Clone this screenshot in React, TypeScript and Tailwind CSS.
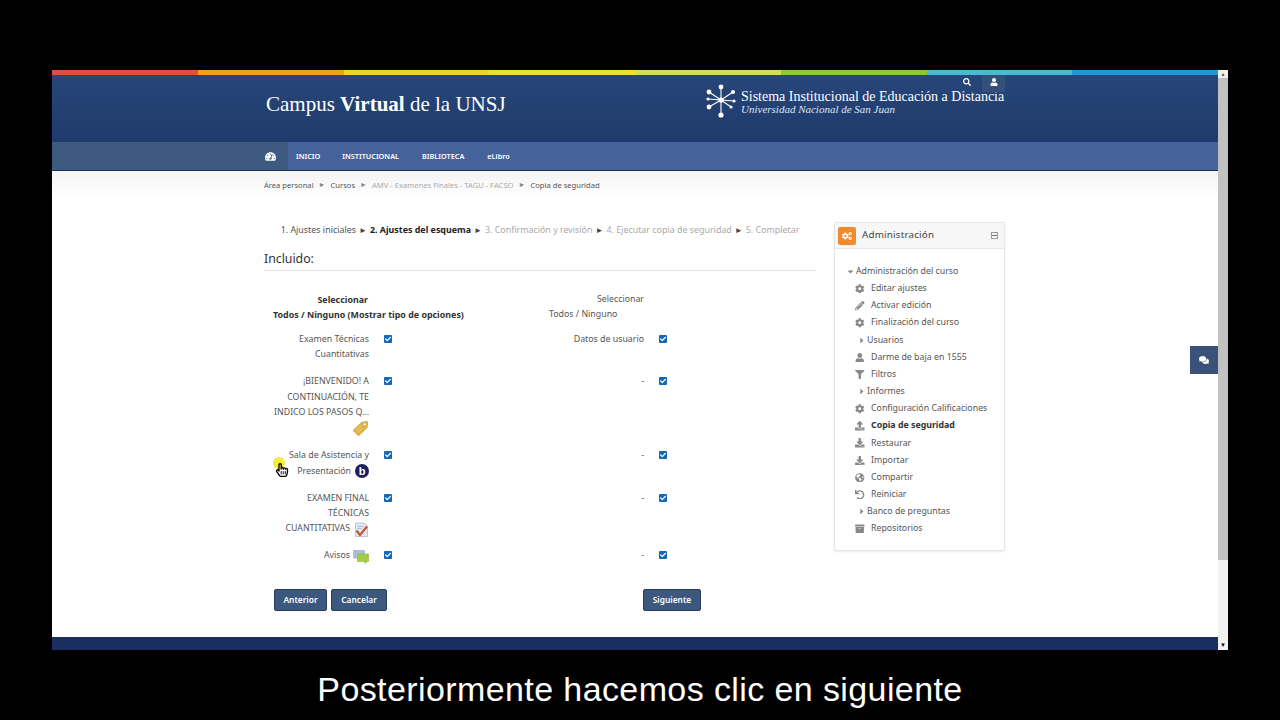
import type { ReactNode } from "react";
import {
  FaArchive,
  FaCaretDown,
  FaCaretRight,
  FaCheck,
  FaCog,
  FaCogs,
  FaComments,
  FaDownload,
  FaFilter,
  FaGlobeAmericas,
  FaPencilAlt,
  FaRegHandPointer,
  FaSearch,
  FaTachometerAlt,
  FaUndo,
  FaUpload,
  FaUser,
} from "react-icons/fa";

const stripes = [
  "bg-[#d9533c]",
  "bg-[#ef9f26]",
  "bg-[#f0d32e]",
  "bg-[#eedd3c]",
  "bg-[#d3dc63]",
  "bg-[#8cc63f]",
  "bg-[#45bcd0]",
  "bg-[#1e9ad6]",
];

function Logo() {
  const arms = [
    [0, -13, 2.4],
    [12, -8, 2],
    [13, 1, 1.6],
    [10, 7, 1.6],
    [0, 15, 2.6],
    [-12, 7, 2.4],
    [-13, -1, 1.6],
    [-12, -8, 2.4],
  ];
  return (
    <svg width="32" height="36" viewBox="-16 -18 32 36" className="shrink-0">
      {arms.map(([x, y, r]) => (
        <g key={`${x}-${y}`}>
          <line x1="0" y1="0" x2={x} y2={y} stroke="#fff" strokeWidth="1.1" />
          <circle cx={x} cy={y} r={r} fill="#fff" />
        </g>
      ))}
      <circle cx="0" cy="0" r="2.6" fill="#fff" />
    </svg>
  );
}

function Check() {
  return (
    <span className="flex h-[8px] w-[8px] items-center justify-center rounded-[1px] bg-[#1568b8]">
      <FaCheck className="text-[6px] text-white" />
    </span>
  );
}

function TagIcon() {
  return (
    <svg width="17" height="17" viewBox="0 0 17 17">
      <path d="M1 10.5 9.8 2.2 15.6 1.6 15.2 7.4 6.6 15.8Z" fill="#e0b040" stroke="#c59a34" strokeWidth="0.7" />
      <path d="M4 10.5 9.5 5.5M6 12.5 11 7.8" stroke="#f5dc8e" strokeWidth="1" />
      <circle cx="12.7" cy="4.4" r="1.2" fill="#fff" />
    </svg>
  );
}

function BbbIcon() {
  return (
    <span className="flex h-[14px] w-[14px] items-center justify-center rounded-full bg-[#1c2160] font-['Liberation_Sans',sans-serif] text-[11px] font-bold leading-none text-white">
      b
    </span>
  );
}

function QuizIcon() {
  return (
    <svg width="15" height="15" viewBox="0 0 15 15">
      <path d="M1.5 1h9l3 3v10.5h-12Z" fill="#dfe8f3" stroke="#aebccd" strokeWidth="0.8" />
      <path d="M3.5 4.5h6M3.5 6.5h4" stroke="#9fb0c6" strokeWidth="0.8" />
      <path d="M2.5 8.5 6 13 13 4.5" fill="none" stroke="#c8562e" strokeWidth="2.2" />
    </svg>
  );
}

function ForumIcon() {
  return (
    <svg width="16" height="15" viewBox="0 0 16 15">
      <path d="M0.5 1.5h11v7.5h-11Z" fill="#a9c0dc" stroke="#8ea8c8" strokeWidth="0.6" />
      <path d="M4.5 5h11v7.5h-2.5v2l-2.5-2h-6Z" fill="#a4cc46" stroke="#8cb338" strokeWidth="0.6" />
    </svg>
  );
}

function Row({
  right,
  children,
  mb = "mb-[11.6px]",
}: {
  right: string;
  children: ReactNode;
  mb?: string;
}) {
  return (
    <div className={`flex ${mb}`}>
      <div className="w-[105px] text-right">{children}</div>
      <div className="ml-[15px] w-[8px] pt-[3px]">
        <Check />
      </div>
      <div className="ml-[131px] w-[121px] text-right">{right}</div>
      <div className="ml-[15px] w-[8px] pt-[3px]">
        <Check />
      </div>
    </div>
  );
}

const menu: { label: string; icon?: ReactNode; caret?: boolean; bold?: boolean }[] = [
  { label: "Editar ajustes", icon: <FaCog /> },
  { label: "Activar edición", icon: <FaPencilAlt /> },
  { label: "Finalización del curso", icon: <FaCog /> },
  { label: "Usuarios", caret: true },
  { label: "Darme de baja en 1555", icon: <FaUser /> },
  { label: "Filtros", icon: <FaFilter /> },
  { label: "Informes", caret: true },
  { label: "Configuración Calificaciones", icon: <FaCog /> },
  { label: "Copia de seguridad", icon: <FaUpload />, bold: true },
  { label: "Restaurar", icon: <FaDownload /> },
  { label: "Importar", icon: <FaDownload /> },
  { label: "Compartir", icon: <FaGlobeAmericas /> },
  { label: "Reiniciar", icon: <FaUndo /> },
  { label: "Banco de preguntas", caret: true },
  { label: "Repositorios", icon: <FaArchive /> },
];

function AdminBlock() {
  return (
    <aside className="h-[329px] w-[171px] rounded-[2px] border border-[#e6e6e6] bg-white shadow-[0_1px_2px_rgba(0,0,0,0.08)]">
      <div className="flex h-[26px] items-center border-b border-[#e8e8e8] bg-[#f7f7f7] pl-[3px] pr-[6px]">
        <span className="flex h-[18px] w-[18px] items-center justify-center rounded-[2px] bg-[#f08a2c] text-[10px] text-white">
          <FaCogs />
        </span>
        <span className="ml-[6px] flex-1 text-[9.8px] tracking-[0.2px] text-[#444]">Administración</span>
        <span className="flex h-[7px] w-[7px] items-center justify-center border border-[#999]">
          <span className="h-px w-[5px] bg-[#777]" />
        </span>
      </div>
      <div className="pt-[14px] text-[8.8px] leading-[17.15px] text-[#555]">
        <div className="flex items-center pl-[10px]">
          <FaCaretDown className="w-[11px] text-[9px] text-[#888]" />
          <span>Administración del curso</span>
        </div>
        {menu.map((item) =>
          item.caret ? (
            <div key={item.label} className="flex items-center pl-[22px]">
              <FaCaretRight className="w-[10px] text-[9px] text-[#888]" />
              <span>{item.label}</span>
            </div>
          ) : (
            <div key={item.label} className="flex items-center pl-[20px]">
              <span className="w-[16px] text-[9.5px] text-[#888]">{item.icon}</span>
              <span className={item.bold ? "font-bold text-[#333]" : ""}>{item.label}</span>
            </div>
          ),
        )}
      </div>
    </aside>
  );
}

function Btn({ children, w }: { children: string; w: string }) {
  return (
    <button className={`h-[22px] ${w} rounded-[2px] border border-[#2b3f5c] bg-[#3c587f] text-[8.4px] font-semibold text-white`}>
      {children}
    </button>
  );
}

export default function App() {
  return (
    <div className="flex h-[720px] w-[1280px] flex-col overflow-hidden bg-black font-['Noto_Sans','Open_Sans',sans-serif]">
      <div className="ml-[52px] mt-[70px] flex h-[580px] w-[1176px]">
        <div className="relative flex w-[1166px] flex-col bg-white">
          <div className="flex h-[5px] shrink-0">
            {stripes.map((c) => (
              <div key={c} className={`flex-1 ${c}`} />
            ))}
          </div>

          <header className="flex h-[67px] shrink-0 bg-gradient-to-b from-[#274679] to-[#203a6c] pl-[214px] text-white">
            <div className="w-[439px] pt-[14px] font-['Liberation_Serif',serif] text-[21px] leading-[30px]">
              Campus <b>Virtual</b> de la UNSJ
            </div>
            <div className="flex pt-[7px]">
              <Logo />
              <div className="ml-[4px] pt-[7px] font-['Liberation_Serif',serif]">
                <div className="text-[14px] leading-[15px]">Sistema Institucional de Educación a Distancia</div>
                <div className="text-[11px] italic leading-[11px] text-[#dfe6f0]">
                  Universidad Nacional de San Juan
                </div>
              </div>
            </div>
          </header>

          <nav className="flex h-[29px] shrink-0 items-center border-b border-[#1d3356] bg-[#46629a] text-[7.3px] font-semibold text-white">
            <div className="flex h-full w-[236px] items-center justify-end bg-[#3e5a80] pr-[12px] text-[11px]">
              <FaTachometerAlt />
            </div>
            <span className="ml-[8px] pt-[1px]">INICIO</span>
            <span className="ml-[22px] pt-[1px]">INSTITUCIONAL</span>
            <span className="ml-[23px] pt-[1px]">BIBLIOTECA</span>
            <span className="ml-[23px] pt-[1px]">eLibro</span>
          </nav>

          <div className="flex h-[28px] shrink-0 items-center gap-[5px] bg-gradient-to-b from-[#f4f4f4] to-white pl-[212px] pt-[1px] text-[7.6px] text-[#555]">
            <span>Área personal</span>
            <span className="text-[7px] text-[#888]">►</span>
            <span>Cursos</span>
            <span className="text-[7px] text-[#888]">►</span>
            <span className="text-[#aaa]">AMV - Examenes Finales - TAGU - FACSO</span>
            <span className="text-[7px] text-[#888]">►</span>
            <span>Copia de seguridad</span>
          </div>

          <main className="flex flex-1 pl-[212px] pt-[23px]">
            <div className="w-[552px] text-[8.8px] leading-[15.4px] text-[#555]">
              <div className="flex h-[16px] items-center justify-center gap-[3px] whitespace-nowrap text-[8.9px] text-[#aaa]">
                <span className="text-[#555]">1. Ajustes iniciales</span>
                <span className="text-[8px] text-[#444]">►</span>
                <b className="text-[#222]">2. Ajustes del esquema</b>
                <span className="text-[8px] text-[#444]">►</span>
                <span>3. Confirmación y revisión</span>
                <span className="text-[8px] text-[#444]">►</span>
                <span>4. Ejecutar copia de seguridad</span>
                <span className="text-[8px] text-[#444]">►</span>
                <span>5. Completar</span>
              </div>
              <h2 className="mt-[13px] h-[20px] border-b border-[#ddd] text-[12.3px] leading-[16px] text-[#333]">Incluido:</h2>

              <div className="mt-[21px] flex h-[40px]">
                <div className="w-[105px] text-right text-[8.9px] font-bold text-[#333]">
                  <div className="pr-[1px]">Seleccionar</div>
                  <div className="ml-[9px] w-[200px] whitespace-nowrap text-left">
                    Todos / Ninguno (Mostrar tipo de opciones)
                  </div>
                </div>
                <div className="ml-[275px] w-[100px] -translate-x-[100px] text-right">
                  <div>Seleccionar</div>
                  <div className="ml-[5px] w-[68px] whitespace-nowrap text-left">Todos / Ninguno</div>
                </div>
              </div>

              <Row right="Datos de usuario">
                Examen Técnicas Cuantitativas
              </Row>
              <Row right="-">
                ¡BIENVENIDO! A CONTINUACIÓN, TE INDICO LOS PASOS Q...
                <div className="flex h-[16px] items-center justify-end">
                  <TagIcon />
                </div>
              </Row>
              <Row right="-">
                Sala de Asistencia y
                <div className="flex items-center justify-end gap-[4px]">
                  Presentación <BbbIcon />
                </div>
              </Row>
              <Row right="-">
                EXAMEN FINAL TÉCNICAS
                <div className="flex items-center justify-end gap-[4px] whitespace-nowrap">
                  CUANTITATIVAS <QuizIcon />
                </div>
              </Row>
              <Row right="-" mb="mb-[25px]">
                <div className="flex items-center justify-end gap-[3px]">
                  Avisos <ForumIcon />
                </div>
              </Row>

              <div className="flex">
                <div className="ml-[10px] flex gap-[4px]">
                  <Btn w="w-[53px]">Anterior</Btn>
                  <Btn w="w-[56px]">Cancelar</Btn>
                </div>
                <div className="ml-[256px]">
                  <Btn w="w-[58px]">Siguiente</Btn>
                </div>
              </div>
            </div>
            <div className="ml-[18px]">
              <AdminBlock />
            </div>
          </main>

          <footer className="h-[13px] shrink-0 bg-[#1a2e62]" />

          <FaSearch className="absolute left-[911px] top-[8px] text-[8px] text-white" />
          <div className="absolute left-[930px] top-[5px] flex h-[17px] w-[23px] items-center justify-center bg-[#34507a] pb-[3px] text-[8px] text-white">
            <FaUser />
          </div>
          <div className="absolute right-0 top-[276px] flex h-[28px] w-[28px] items-center justify-center bg-[#3a5278] text-[10px] text-white">
            <FaComments />
          </div>
          <div className="absolute left-[221px] top-[387px] h-[12px] w-[12px] rounded-full bg-[#f3ee3a]" />
          <FaRegHandPointer className="absolute left-[223px] top-[393px] text-[14px] text-black" />
        </div>

        <div className="flex w-[10px] flex-col bg-[#f1f1f1]">
          <div className="flex h-[8px] items-center justify-center text-[5px] leading-none text-[#555]">▲</div>
          <div className="h-[482px] bg-[#c1c1c1]" />
          <div className="flex-1" />
          <div className="flex h-[10px] items-center justify-center text-[6px] leading-none text-black">▼</div>
        </div>
      </div>

      <div className="flex h-[70px] justify-center pt-[19px] font-['Liberation_Sans',sans-serif] text-[34px] leading-[40px] tracking-[0.4px] text-white">
        Posteriormente hacemos clic en siguiente
      </div>
    </div>
  );
}
